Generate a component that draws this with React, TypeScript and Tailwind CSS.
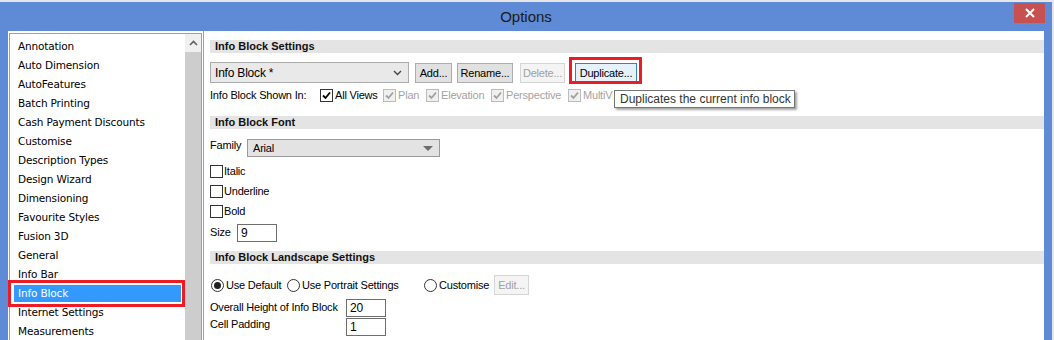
import React from 'react';

const items = [
    'Annotation',
    'Auto Dimension',
    'AutoFeatures',
    'Batch Printing',
    'Cash Payment Discounts',
    'Customise',
    'Description Types',
    'Design Wizard',
    'Dimensioning',
    'Favourite Styles',
    'Fusion 3D',
    'General',
    'Info Bar',
    'Info Block',
    'Internet Settings',
    'Measurements',
];

function Check({ checked = false, disabled = false }: { checked?: boolean; disabled?: boolean }) {
    return (
        <span
            className={`flex h-[13px] w-[13px] shrink-0 items-center justify-center border ${
                disabled ? 'border-[#bcbcbc] bg-[#f0f0f0]' : 'border-[#333] bg-white'
            }`}
        >
            {checked && (
                <svg width="9" height="9" viewBox="0 0 9 9">
                    <path
                        d="M1 4.5 L3.5 7 L8 1.5"
                        fill="none"
                        stroke={disabled ? '#a0a0a0' : '#000'}
                        strokeWidth="1.8"
                    />
                </svg>
            )}
        </span>
    );
}

function Radio({ on = false }: { on?: boolean }) {
    return (
        <span className="flex h-[13px] w-[13px] shrink-0 items-center justify-center rounded-full border border-[#333] bg-white">
            {on && <span className="h-[7px] w-[7px] rounded-full bg-[#222]" />}
        </span>
    );
}

function Btn({ children, disabled = false, w }: { children: React.ReactNode; disabled?: boolean; w: string }) {
    return (
        <div
            className={`flex h-[20px] items-center justify-center border ${w} ${
                disabled ? 'border-[#d5d5d5] bg-[#f4f4f4] text-[#a0a0a0]' : 'border-[#adadad] bg-[#e1e1e1] text-black'
            }`}
        >
            {children}
        </div>
    );
}

function Header({ children }: { children: React.ReactNode }) {
    return (
        <div className="h-[13px] bg-[#e4e4e4] pl-[5px] text-[11px] font-bold leading-[13px] tracking-normal text-[#111]">
            {children}
        </div>
    );
}

function Field({ value, w }: { value: string; w: string }) {
    return (
        <div className={`flex h-[18px] items-center border border-[#6e6e6e] bg-white pl-[3px] text-[12px] ${w}`}>
            {value}
        </div>
    );
}

export default function App() {
    return (
        <div
            className="h-[340px] w-[1054px] overflow-hidden bg-[#e6e6e6] pt-[2px] pr-[2px] text-black"
            style={{ fontFamily: '"Liberation Sans", Arial, sans-serif' }}
        >
            <div className="flex h-full flex-col bg-[#5f8ad5]">
                {/* title bar */}
                <div className="grid h-[29px] shrink-0 grid-cols-[1fr_auto_1fr]">
                    <div />
                    <div className="pt-[6px] text-[15px] leading-[18px] text-[#1a1a1a]">Options</div>
                    <div className="flex justify-end pr-[7px] pt-[1px]">
                        <div className="flex h-[20px] w-[31px] items-center justify-center bg-[#c75050]">
                            <svg width="10" height="10" viewBox="0 0 10 10">
                                <path d="M1 1 L9 9 M9 1 L1 9" stroke="#fff" strokeWidth="2" />
                            </svg>
                        </div>
                    </div>
                </div>

                {/* body */}
                <div className="mx-[8px] flex flex-1 bg-white">
                    {/* list */}
                    <div className="ml-[1px] mt-[2px] flex w-[193px] shrink-0 border border-[#a0a0a0] bg-white">
                        <div
                            className="flex w-[175px] flex-col pt-[3px] text-[10.5px] tracking-[-0.15px] text-black"
                            style={{ fontFamily: '"DejaVu Sans", Tahoma, sans-serif' }}
                        >
                            {items.map((it) => {
                                const sel = it === 'Info Block';
                                return (
                                    <div key={it} className="relative flex h-[19px] items-center px-[4px]">
                                        <div
                                            className={`flex h-[17px] w-full items-center px-[4px] ${
                                                sel ? 'bg-[#3399ff] text-white' : ''
                                            }`}
                                        >
                                            {it}
                                        </div>
                                        {sel && (
                                            <div className="absolute -left-[2px] -top-[4px] right-0 -bottom-[4px] border-[3px] border-[#ed1c24]" />
                                        )}
                                    </div>
                                );
                            })}
                        </div>
                        <div className="flex w-[16px] flex-col">
                            <div className="flex h-[18px] items-center justify-center bg-[#f0f0f0]">
                                <svg width="9" height="6" viewBox="0 0 9 6">
                                    <path d="M1 5 L4.5 1.5 L8 5" fill="none" stroke="#606060" strokeWidth="1.6" />
                                </svg>
                            </div>
                            <div className="flex-1 bg-[#cdcdcd]" />
                        </div>
                    </div>

                    {/* settings panel */}
                    <div className="ml-[1px] flex flex-1 flex-col border-l border-[#a0a0a0] pl-[6px] pt-[9px] text-[11px] tracking-[-0.2px]">
                        <Header>Info Block Settings</Header>

                        <div className="mt-[9px] flex h-[21px] items-start">
                            <div className="flex h-[21px] w-[199px] items-center justify-between border border-[#acacac] bg-[#e9e9e9] pl-[4px] pr-[6px] text-[12px]">
                                <span>Info Block *</span>
                                <svg width="9" height="6" viewBox="0 0 9 6">
                                    <path d="M1 1 L4.5 4.5 L8 1" fill="none" stroke="#444" strokeWidth="1.4" />
                                </svg>
                            </div>
                            <div className="ml-[6px] mt-[1px]">
                                <Btn w="w-[37px]">Add...</Btn>
                            </div>
                            <div className="ml-[5px] mt-[1px]">
                                <Btn w="w-[56px]">Rename...</Btn>
                            </div>
                            <div className="ml-[7px] mt-[1px]">
                                <Btn w="w-[45px]" disabled>
                                    Delete...
                                </Btn>
                            </div>
                            <div className="relative ml-[10px] mt-[1px]">
                                <div className="flex h-[20px] w-[62px] items-center justify-center border border-[#3c7fb1] bg-[#e5f1fb]">
                                    Duplicate...
                                </div>
                                <div className="absolute -left-[6px] -right-[5px] -top-[6px] -bottom-[1px] border-[3px] border-[#ed1c24]" />
                                <div className="absolute left-[39px] top-[27px] z-10 flex h-[18px] w-[181px] items-center whitespace-nowrap border border-[#767676] bg-white pl-[5px] text-[12px] tracking-normal text-[#333] shadow-[2px_2px_2px_rgba(0,0,0,0.35)]">
                                    Duplicates the current info block
                                </div>
                            </div>
                        </div>

                        <div className="mt-[4px] flex h-[17px] items-center">
                            <span className="w-[110px]">Info Block Shown In:</span>
                            <Check checked />
                            <span className="ml-[2px] w-[48px]">All Views</span>
                            <Check checked disabled />
                            <span className="ml-[2px] w-[28px] text-[#a3a3a3]">Plan</span>
                            <Check checked disabled />
                            <span className="ml-[2px] w-[50px] text-[#a3a3a3]">Elevation</span>
                            <Check checked disabled />
                            <span className="ml-[2px] w-[62px] text-[#a3a3a3]">Perspective</span>
                            <Check checked disabled />
                            <span className="ml-[2px] w-[30px] overflow-hidden whitespace-nowrap text-[#a3a3a3]">
                                MultiView
                            </span>
                        </div>

                        <div className="mt-[12px]">
                            <Header>Info Block Font</Header>
                        </div>

                        <div className="mt-[10px] flex h-[18px] items-start">
                            <span className="w-[37px] leading-[13px]">Family</span>
                            <div className="flex h-[18px] w-[193px] items-center justify-between border border-[#9a9a9a] bg-[#e3e3e3] pl-[5px] pr-[6px]">
                                <span>Arial</span>
                                <svg width="10" height="5" viewBox="0 0 10 5">
                                    <path d="M0 0 L10 0 L5 5 Z" fill="#6d6d6d" />
                                </svg>
                            </div>
                        </div>

                        <div className="mt-[4px] flex h-[20px] items-center">
                            <Check />
                            <span className="ml-[1px]">Italic</span>
                        </div>
                        <div className="flex h-[20px] items-center">
                            <Check />
                            <span className="ml-[1px]">Underline</span>
                        </div>
                        <div className="flex h-[20px] items-center">
                            <Check />
                            <span className="ml-[1px]">Bold</span>
                        </div>
                        <div className="mt-[2px] flex h-[19px] items-center">
                            <span className="w-[27px]">Size</span>
                            <Field value="9" w="w-[40px]" />
                        </div>

                        <div className="mt-[9px]">
                            <Header>Info Block Landscape Settings</Header>
                        </div>

                        <div className="mt-[11px] flex h-[20px] items-center">
                            <span className="ml-[1px]">
                                <Radio on />
                            </span>
                            <span className="ml-[2px] w-[61px]">Use Default</span>
                            <Radio />
                            <span className="ml-[2px] w-[122px]">Use Portrait Settings</span>
                            <Radio />
                            <span className="ml-[2px] w-[55px]">Customise</span>
                            <Btn w="w-[35px]" disabled>
                                Edit...
                            </Btn>
                        </div>

                        <div className="mt-[4px] flex h-[17px] items-center">
                            <span className="w-[136px]">Overall Height of Info Block</span>
                            <Field value="20" w="w-[40px]" />
                        </div>
                        <div className="mt-[2px] flex h-[18px] items-start">
                            <span className="w-[136px] leading-[13px]">Cell Padding</span>
                            <Field value="1" w="w-[40px]" />
                        </div>
                    </div>
                </div>
            </div>
        </div>
    );
}
